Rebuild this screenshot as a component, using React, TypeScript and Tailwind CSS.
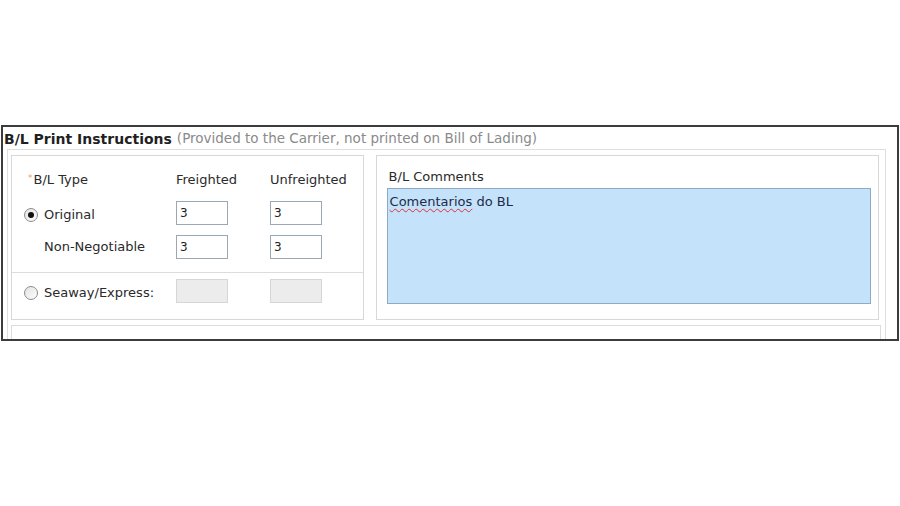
import React from "react";

function Radio({ checked }: { checked?: boolean }) {
  return (
    <span className="flex h-[14px] w-[14px] items-center justify-center rounded-full border border-[#8c8c8c] bg-gradient-to-br from-[#e2e2e2] to-white">
      {checked ? <span className="h-[6px] w-[6px] rounded-full bg-[#111]" /> : null}
    </span>
  );
}

function Field({ value, disabled }: { value?: string; disabled?: boolean }) {
  return (
    <div
      className={
        disabled
          ? "h-[24px] w-[52px] border border-[#d6d6d6] bg-[#ececec]"
          : "flex h-[24px] w-[52px] items-center border border-[#9aa8b6] bg-white pl-[3px] text-[12px] text-[#222]"
      }
    >
      {value}
    </div>
  );
}

export default function App() {
  return (
    <div
      className="h-[506px] w-[900px] bg-white pt-[125px]"
      style={{ fontFamily: '"DejaVu Sans", Verdana, sans-serif' }}
    >
      <div className="ml-[1px] h-[216px] w-[898px] overflow-hidden border-2 border-[#3c3c3c]">
        <div className="flex h-[22px] items-center pl-[1px] pt-[1px] leading-none">
          <span className="text-[14px] font-bold text-[#1f1f1f]">B/L Print Instructions</span>
          <span className="ml-[5px] text-[13.5px] text-[#8a8a8a]">
            (Provided to the Carrier, not printed on Bill of Lading)
          </span>
        </div>
        <div className="ml-[4px] w-[879px] border border-[#dedede] pl-[3px] pr-[6px] pt-[5px]">
          <div className="flex gap-[12px]">
            {/* Left panel */}
            <div className="flex h-[165px] w-[353px] flex-col border border-[#d8d8d8] text-[13px] text-[#2a2a2a]">
              <div className="grid grid-cols-[164px_94px_1fr] pt-[14px]">
                <div className="flex h-[20px] items-center pl-[16px]">
                  <span className="mr-[1px] self-start pt-[2px] text-[9px] text-[#f0a050]">*</span>
                  <span>B/L Type</span>
                </div>
                <div className="flex h-[20px] items-center">Freighted</div>
                <div className="flex h-[20px] items-center">Unfreighted</div>

                <div className="mt-[11px] flex h-[24px] items-center pl-[12px] pt-[3px]">
                  <Radio checked />
                  <span className="ml-[6px]">Original</span>
                </div>
                <div className="mt-[11px]">
                  <Field value="3" />
                </div>
                <div className="mt-[11px]">
                  <Field value="3" />
                </div>

                <div className="mt-[10px] flex h-[24px] items-center pl-[32px]">Non-Negotiable</div>
                <div className="mt-[10px]">
                  <Field value="3" />
                </div>
                <div className="mt-[10px]">
                  <Field value="3" />
                </div>
              </div>
              <div className="mt-[13px] border-t border-[#dcdcdc]" />
              <div className="grid grid-cols-[164px_94px_1fr] pt-[6px]">
                <div className="flex h-[24px] items-center pl-[12px] pt-[3px]">
                  <Radio />
                  <span className="ml-[6px]">Seaway/Express:</span>
                </div>
                <div>
                  <Field disabled />
                </div>
                <div>
                  <Field disabled />
                </div>
              </div>
            </div>
            {/* Right panel */}
            <div className="h-[165px] w-[504px] border border-[#d8d8d8] pl-[10px] pt-[11px] text-[13px] text-[#2a2a2a]">
              <div className="flex h-[20px] items-center pl-[2px]">B/L Comments</div>
              <div className="mt-[1px] h-[116px] w-[484px] border border-[#8eaac4] bg-[#c5e2fb] px-[2px] pt-[3px] text-[13px] text-[#1e2b48]">
                <span className="underline decoration-[#d9303a] decoration-wavy decoration-1 underline-offset-2">
                  Comentarios
                </span>{" "}
                do BL
              </div>
            </div>
          </div>
          <div className="mt-[5px] h-[40px] w-[870px] border border-[#dcdcdc]" />
        </div>
      </div>
    </div>
  );
}
